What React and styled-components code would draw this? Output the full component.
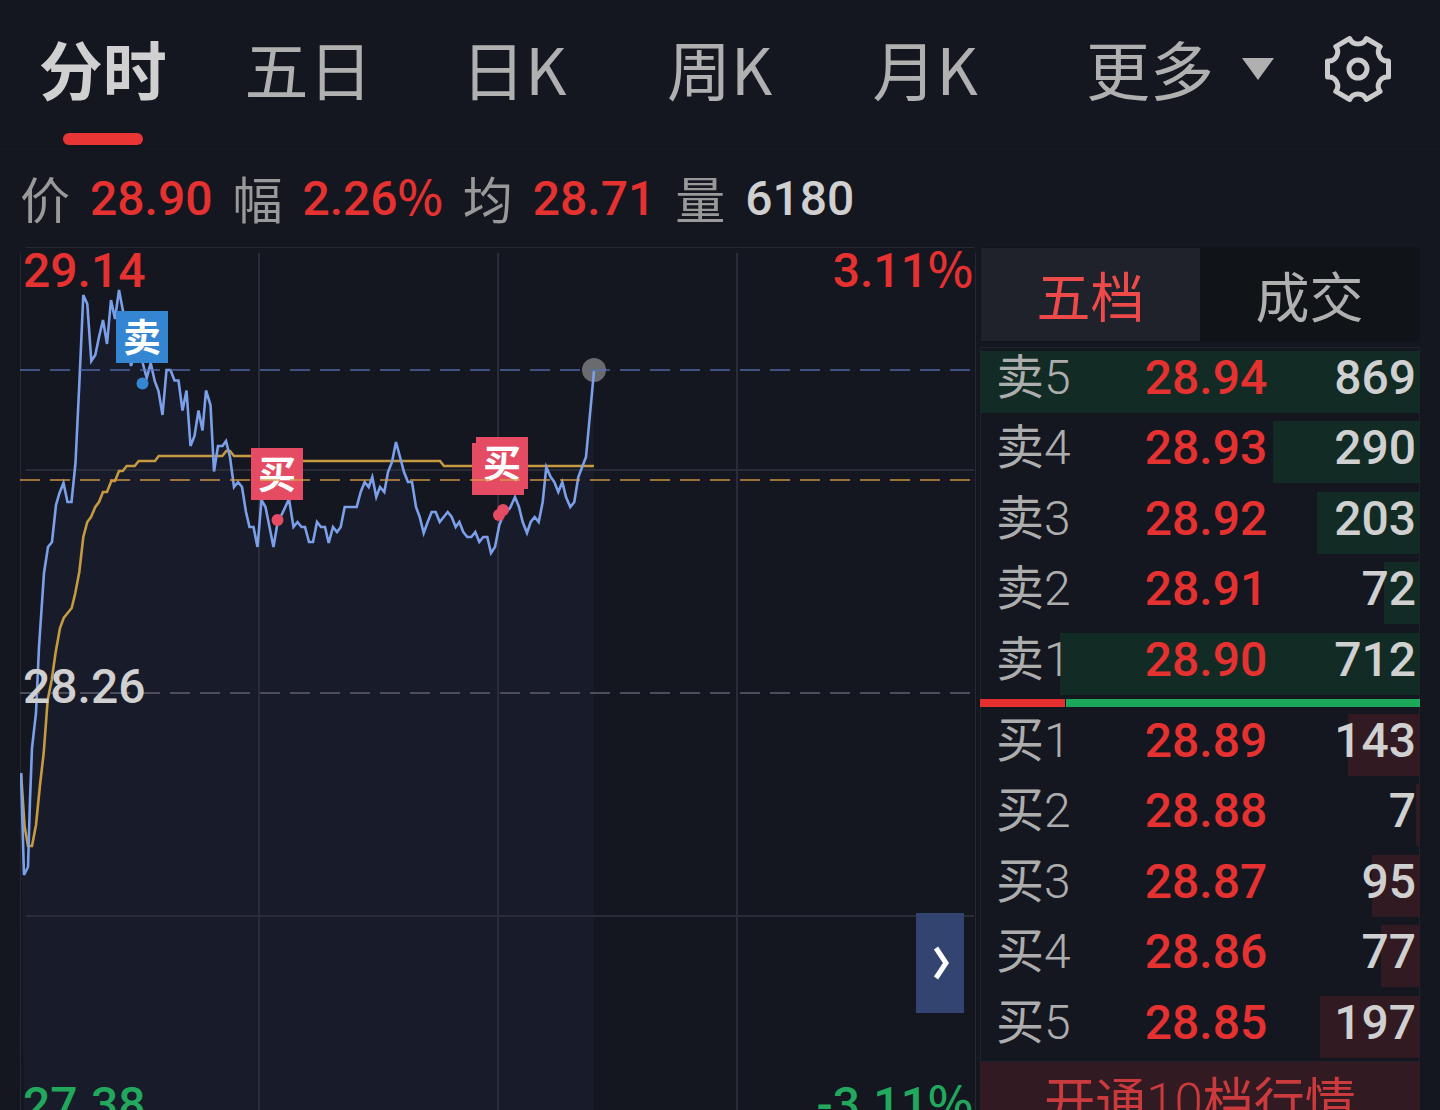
import React, { useState } from "react";
import styled, { createGlobalStyle } from "styled-components";

const tabs = ["分时", "五日", "日K", "周K", "月K"];

const quotes = [
  { label: "价", value: "28.90", color: "#e63131" },
  { label: "幅", value: "2.26", unit: "%", color: "#e63131" },
  { label: "均", value: "28.71", color: "#e63131" },
  { label: "量", value: "6180", color: "#d0d0d0" },
];

const asks = [
  { label: "卖", level: 5, price: "28.94", volume: 869 },
  { label: "卖", level: 4, price: "28.93", volume: 290 },
  { label: "卖", level: 3, price: "28.92", volume: 203 },
  { label: "卖", level: 2, price: "28.91", volume: 72 },
  { label: "卖", level: 1, price: "28.90", volume: 712 },
];

const bids = [
  { label: "买", level: 1, price: "28.89", volume: 143 },
  { label: "买", level: 2, price: "28.88", volume: 7 },
  { label: "买", level: 3, price: "28.87", volume: 95 },
  { label: "买", level: 4, price: "28.86", volume: 77 },
  { label: "买", level: 5, price: "28.85", volume: 197 },
];

const maxVolume = 869;

const priceLine =
  "21,773 24,875 28,867 30,800 32,748 36,713 39,647 44,573 48,547 52,542 56,505 59.5,493 63.5,483 67.5,502 71.5,502 75.5,463 79.5,380 83.3,295 87.3,304 91.3,361 95.3,355 99,337 103,320 107,344 111,300 115,319 119,290 123,311 127,337 131,366 135,352 139,346 142.7,363 146.7,378 150.7,363 154.7,381 158.5,391 162.5,415 166.5,370 170.5,370 174.5,380.5 178.5,380.5 182.5,410.5 186.5,390.5 190.5,446 194.5,436 198.5,410.5 202.5,430.5 206,390.5 210.5,405 214,471.5 218,446 222.5,446 226,441 230,457 234,487 238,482 242,487 246,512 249.5,527 253.5,527 257.5,547 261.5,500 265.5,507 269.5,527 273.5,547 277.5,523 282.5,513 289,499 293.5,527 297.5,522 301.5,527 305,527 309,542 313,542 317,522 321,527 325,527 328.7,543 333,527 337,532 340.7,527 344.7,507 356.7,507 360.7,492 364.7,482 368.7,487 372.3,477 376.3,497 380,487 384.3,492 388,472 392,462 396,442 400.3,458 404,472 408,482 412,482 416,507 419.7,517 423.7,533 427.7,522 431.7,512 435.7,512 439.7,522 447.7,512 451.7,517 455.7,527 459.3,522 463.3,532 467.3,537 471.3,537 475.3,532 479.3,542 483.3,537 487.3,537 491,553 495,547 499.3,525 503.3,515 510,508 515,497 519,507 522.7,522 527,533 530.7,522 534.7,517 538.7,522 542.7,502 546.3,467 550.7,477 554.3,482 558.3,492 562.3,482 566,497 570.3,507 574.3,502 578.3,477 586,457 594,371";

const averageLine =
  "21,773 24.7,827 28,846 32,846 36,825 40,785 43.7,753 47.7,700 51.7,680 55.7,652 60,628 63.7,618 71.7,608 75.3,593 79.3,572 83.3,537 87.3,522 91,517 95.3,507 99,502 103,492 107,492 111.3,481 115,481 119,471 122.7,471 126.7,466 134.7,466 138.7,461 155,461 158.7,456 222.3,456 226.3,451 230,451 234,456 280,456 285,461 440,461 444,466 594,466";

const GearIcon = () => (
  <svg width="68" height="68" viewBox="-34 -34 68 68" fill="none" stroke="#cbcbcb">
    <path
      strokeWidth="5"
      strokeLinejoin="round"
      d="M30.5 -8 L30.5 8 A9 9 0 0 0 22.2 22.4 L8.3 30.5 A9 9 0 0 0 -8.3 30.5 L-22.2 22.4 A9 9 0 0 0 -30.5 8 L-30.5 -8 A9 9 0 0 0 -22.2 -22.4 L-8.3 -30.5 A9 9 0 0 0 8.3 -30.5 L22.2 -22.4 A9 9 0 0 0 30.5 -8 Z"
    />
    <circle r="9" strokeWidth="5" />
  </svg>
);

const TrendChart = () => (
  <ChartSvg viewBox="20 247 956 892" role="img" aria-label="分时">
    <polygon points={`24,1139 ${priceLine} 594,1139`} fill="#181b29" />

    <g stroke="#2a2d38" strokeWidth="2">
      <path d="M259 253V1139M498 253V1139M737 253V1139" />
      <path d="M26 470H974M26 916H974" />
    </g>
    <path d="M26 247.5H974M20.5 253V1139M975.5 253V1139" stroke="#262932" />

    <polyline points={averageLine} fill="none" stroke="#c59a41" strokeWidth="2.6" />
    <circle cx="594" cy="370" r="12" fill="#6a6b6e" />
    <polyline points={priceLine} fill="none" stroke="#7b9fe9" strokeWidth="2.6" />

    <g fill="#3486d3">
      <rect x="116" y="311" width="52" height="52" />
      <circle cx="142.5" cy="383.5" r="6" />
    </g>
    <g fill="#e54c63">
      <rect x="251" y="448" width="52" height="52" />
      <circle cx="277.5" cy="520" r="6" />
      <rect x="472" y="443" width="52" height="52" />
      <rect x="476" y="437" width="52" height="52" />
      <circle cx="499" cy="515" r="6" />
      <circle cx="503" cy="510" r="6" />
    </g>
    <MarkText x="142" y="351">卖</MarkText>
    <MarkText x="277" y="488">买</MarkText>
    <MarkText x="502" y="477">买</MarkText>

    <g strokeWidth="2" strokeDasharray="20 10">
      <path d="M20 370H970" stroke="#5573b8" opacity="0.65" />
      <path d="M20 480H970" stroke="#d99a45" opacity="0.7" />
      <path d="M20 693H970" stroke="#4b4e58" />
    </g>
  </ChartSvg>
);

const Orders = ({ rows, color, caption }) => (
  <OrderTable aria-label={caption}>
    <tbody>
      {rows.map((row) => (
        <OrderRow
          key={row.level}
          $color={color}
          $fill={(row.volume / maxVolume) * 100}
        >
          <Level scope="row">
            {row.label}
            <Thin>{row.level}</Thin>
          </Level>
          <Price>{row.price}</Price>
          <Volume>{row.volume}</Volume>
        </OrderRow>
      ))}
    </tbody>
  </OrderTable>
);

const App = () => {
  const [active, setActive] = useState("分时");
  const [book, setBook] = useState("五档");

  return (
    <Container>
      <GlobalStyle />
      <Header>
        {tabs.map((tab) => (
          <Tab key={tab} $active={tab === active} onClick={() => setActive(tab)}>
            {tab}
          </Tab>
        ))}
        <More>
          更多
          <svg width="32" height="22" viewBox="0 0 32 22">
            <path d="M0 0H32L16 22Z" fill="#b0b0b0" />
          </svg>
        </More>
        <Settings aria-label="设置">
          <GearIcon />
        </Settings>
      </Header>

      <Summary>
        {quotes.map((item) => (
          <React.Fragment key={item.label}>
            <SummaryLabel>{item.label}</SummaryLabel>
            <SummaryValue $color={item.color}>
              {item.value}
              {item.unit && <Unit>{item.unit}</Unit>}
            </SummaryValue>
          </React.Fragment>
        ))}
      </Summary>

      <Wrapper>
        <Chart>
          <TrendChart />
          <Scale>
            <ScaleRow $color="#e63131">
              <span>29.14</span>
              <span>
                3.11<Unit>%</Unit>
              </span>
            </ScaleRow>
            <ScaleRow $color="#d0d0d0">
              <span>28.26</span>
            </ScaleRow>
            <ScaleRow $color="#21a85d">
              <span>27.38</span>
              <span>
                -3.11<Unit>%</Unit>
              </span>
            </ScaleRow>
          </Scale>
          <Expand aria-label="展开">
            <svg width="20" height="36" viewBox="0 0 20 36" fill="none">
              <path d="M6 3L16 18L6 33" stroke="#fff" strokeWidth="5" />
            </svg>
          </Expand>
        </Chart>

        <Side>
          <BookTabs>
            {["五档", "成交"].map((name) => (
              <BookTab key={name} $active={name === book} onClick={() => setBook(name)}>
                {name}
              </BookTab>
            ))}
          </BookTabs>
          <Book>
            <Orders rows={asks} color="#122b24" caption="卖盘" />
            <Ratio>
              <RatioPart $grow={85} $color="#e62f2f" />
              <RatioPart $grow={354} $color="#1ca85a" />
            </Ratio>
            <Bids>
              <Orders rows={bids} color="#321a22" caption="买盘" />
            </Bids>
          </Book>
          <Upgrade>
            开通<Thin>10</Thin>档行情
          </Upgrade>
        </Side>
      </Wrapper>
    </Container>
  );
};

export default App;

const GlobalStyle = createGlobalStyle`
  * {
    box-sizing: border-box;
  }

  body {
    margin: 0;
    background-color: #14171f;
  }

  button {
    margin: 0;
    padding: 0;
    border: none;
    background: none;
    font-family: inherit;
    cursor: pointer;
  }
`;

const textFont = `"Noto Sans CJK SC", sans-serif`;
const numberFont = `Roboto, "Noto Sans CJK SC", sans-serif`;

const Container = styled.div`
  height: 100vh;
  overflow: hidden;
  background-color: #14171f;
  color: #b0b0b0;
  font-family: ${textFont};
  font-weight: 400;
`;

const Thin = styled.span`
  font-family: ${numberFont};
  font-weight: 300;
  line-height: 1;
`;

const Unit = styled.span`
  font-family: ${textFont};
  line-height: 1;
`;

const Header = styled.nav`
  display: grid;
  grid-template-columns: repeat(5, 1fr) 296px 116px;
  height: 147px;
  border-bottom: 1px solid #11141b;
`;

const Tab = styled.button`
  position: relative;
  padding-bottom: 12px;
  font-size: 64px;
  line-height: 100px;
  font-weight: ${({ $active }) => ($active ? 700 : 400)};
  color: ${({ $active }) => ($active ? "#d0d0d0" : "#b0b0b0")};

  &::after {
    content: "";
    display: ${({ $active }) => ($active ? "block" : "none")};
    position: absolute;
    left: 50%;
    bottom: 1px;
    width: 80px;
    height: 12px;
    margin-left: -40px;
    border-radius: 6px;
    background-color: #ea3535;
  }
`;

const More = styled.button`
  display: flex;
  align-items: center;
  justify-content: center;
  gap: 28px;
  padding: 0 0 12px 8px;
  font-size: 64px;
  line-height: 100px;
  color: #b0b0b0;

  svg {
    margin-top: 4px;
  }
`;

const Settings = styled.button`
  display: flex;
  align-items: center;
  padding-bottom: 8px;
`;

const Summary = styled.div`
  display: flex;
  align-items: center;
  gap: 20px;
  height: 100px;
  padding: 0 20px;
`;

const SummaryLabel = styled.span`
  font-size: 50px;
  line-height: 60px;
  color: #999;
`;

const SummaryValue = styled.span`
  padding-top: 4px;
  font-family: ${numberFont};
  font-size: 48px;
  line-height: 60px;
  font-weight: 500;
  color: ${({ $color }) => $color};
`;

const Wrapper = styled.div`
  display: grid;
  grid-template-columns: minmax(0, 1fr) 440px;
  align-items: start;
  gap: 4px;
  padding: 0 20px;
`;

const Chart = styled.div`
  position: relative;
`;

const ChartSvg = styled.svg`
  display: block;
  width: 100%;
  height: auto;
`;

const MarkText = styled.text`
  font-size: 38px;
  font-weight: 700;
  text-anchor: middle;
  fill: #fff;
`;

/* price labels drawn over the plot */
const Scale = styled.div`
  position: absolute;
  inset: -5px 3px 8px;
  display: flex;
  flex-direction: column;
  justify-content: space-between;
  pointer-events: none;
`;

const ScaleRow = styled.div`
  display: flex;
  align-items: baseline;
  justify-content: space-between;
  font-family: ${numberFont};
  font-size: 48px;
  line-height: 52px;
  font-weight: 500;
  color: ${({ $color }) => $color};
`;

const Expand = styled.button`
  position: absolute;
  right: 12px;
  bottom: 126px;
  display: flex;
  align-items: center;
  justify-content: center;
  width: 48px;
  height: 100px;
  background-color: #32446f;
`;

const Side = styled.div`
  display: flex;
  flex-direction: column;
`;

const BookTabs = styled.div`
  display: grid;
  grid-template-columns: 1fr 1fr;
  height: 95px;
  margin-bottom: 5px;
  border: 1px solid #11141b;
`;

const BookTab = styled.button`
  font-size: 54px;
  line-height: 80px;
  color: ${({ $active }) => ($active ? "#ee4a4a" : "#b0b0b0")};
  background-color: ${({ $active }) => ($active ? "#1f222b" : "#101317")};
`;

const Book = styled.div`
  box-shadow: inset 0 0 0 1px #20232b;
`;

const OrderTable = styled.table`
  width: 100%;
  height: 352px;
  table-layout: fixed;
  border-collapse: collapse;
`;

const OrderRow = styled.tr`
  background-image: linear-gradient(
    ${({ $color }) => $color},
    ${({ $color }) => $color}
  );
  background-repeat: no-repeat;
  background-position: right 4px;
  background-size: ${({ $fill }) => $fill}% 62px;
`;

const Level = styled.th`
  width: 37%;
  padding: 0 0 12px 16px;
  font-size: 48px;
  line-height: 52px;
  font-weight: 400;
  text-align: left;
  vertical-align: baseline;
  color: #adadad;
`;

const Price = styled.td`
  width: 30%;
  padding: 0 0 0 2px;
  font-family: ${numberFont};
  font-size: 48px;
  line-height: 52px;
  font-weight: 500;
  vertical-align: baseline;
  color: #e63131;
`;

const Volume = styled(Price)`
  width: 33%;
  padding-right: 4px;
  text-align: right;
  color: #d0d0d0;
`;

const Ratio = styled.div`
  display: flex;
  gap: 1px;
  height: 8px;
`;

const RatioPart = styled.div`
  flex: ${({ $grow }) => $grow};
  background-color: ${({ $color }) => $color};
`;

const Bids = styled.div`
  padding-top: 3px;
`;

const Upgrade = styled.button`
  height: 90px;
  padding-bottom: 18px;
  font-size: 51px;
  line-height: 60px;
  color: #cb3a3d;
  background-color: #321a22;
`;
